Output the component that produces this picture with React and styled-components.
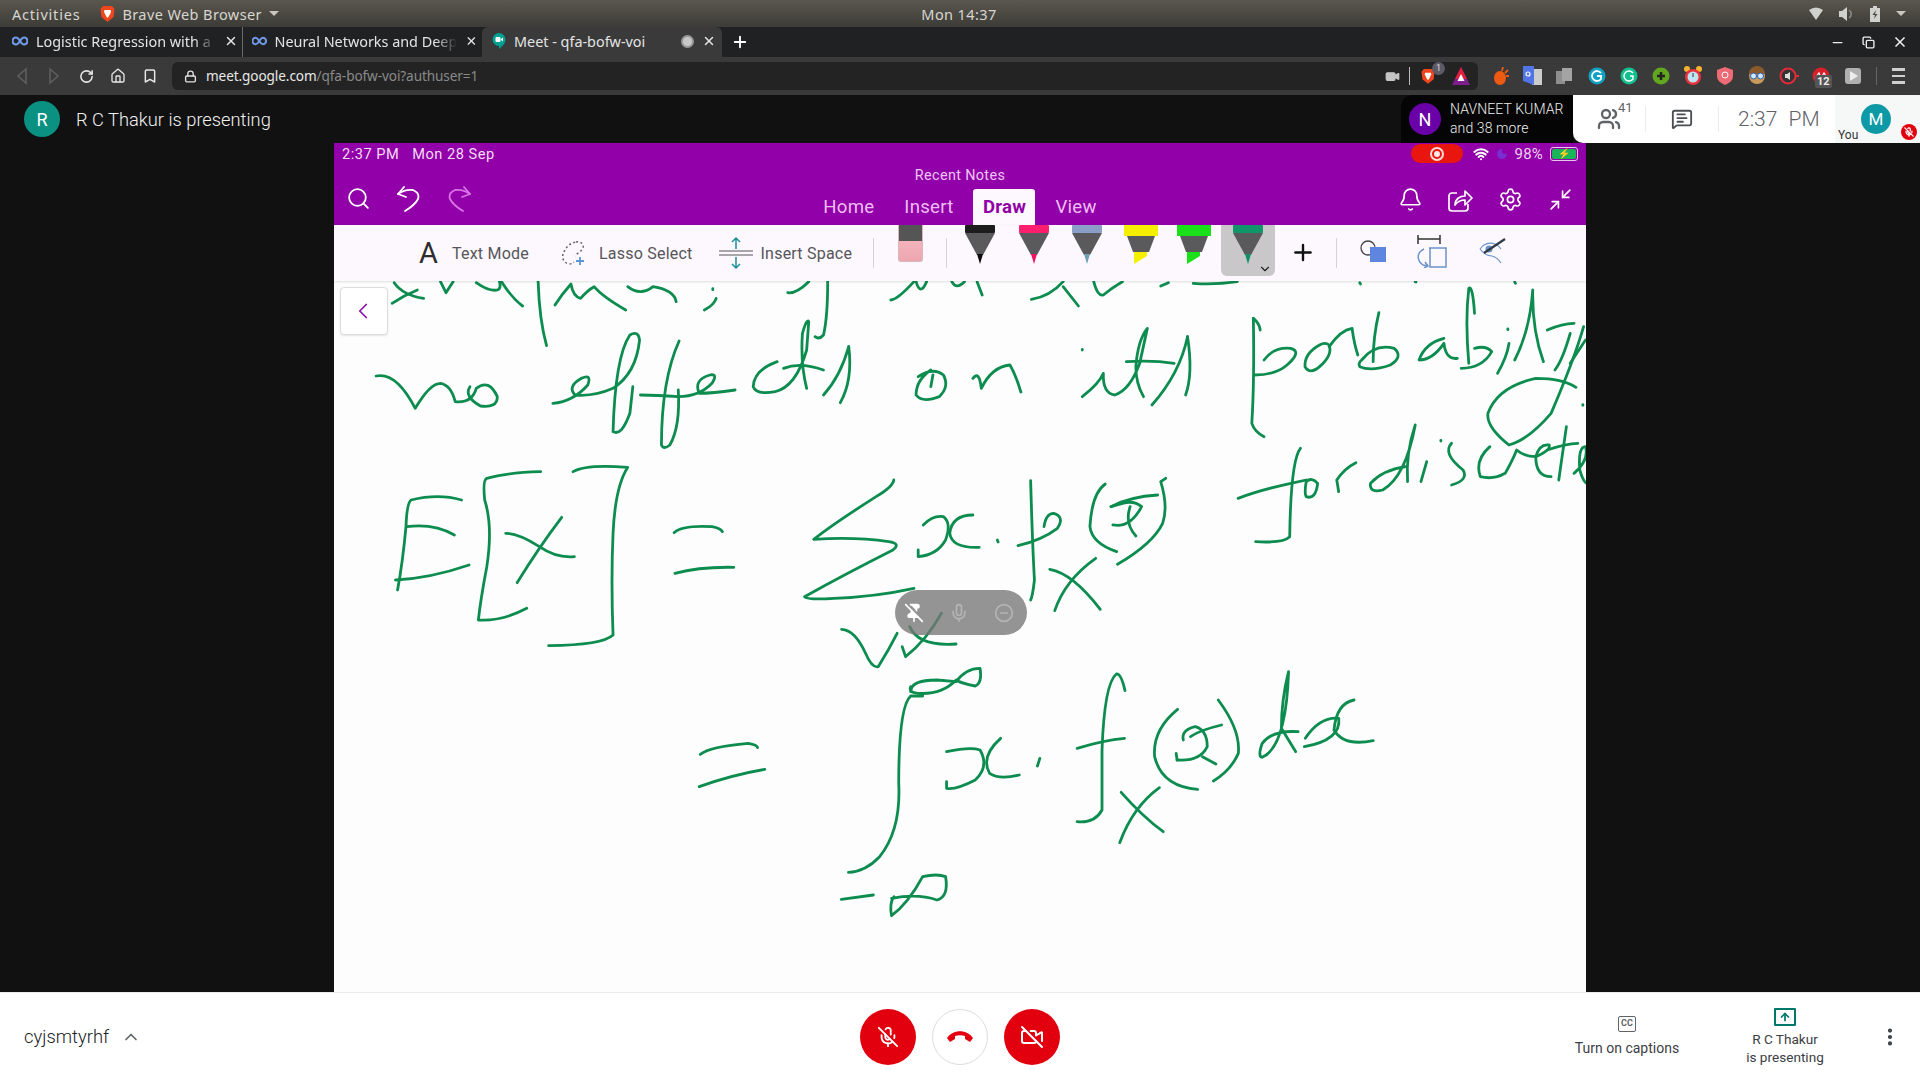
import React from 'react';
import styled, { createGlobalStyle } from 'styled-components';
import {
  ArrowUp, Bell, ChevronDown, ChevronLeft, ChevronUp, CircleMinus, EllipsisVertical, Home, Lock, Mic, MicOff, Minimize2,
  PinOff, Plus, RotateCw, Search, Settings, VideoOff, Wifi, X, Bookmark, Users,
  MessageSquareText, Moon, Minus, Copy, Video,
} from 'lucide-react';

const GlobalStyle = createGlobalStyle`
  html, body { margin: 0; padding: 0; background: #111; overflow: hidden; }
  * { box-sizing: border-box; }
  #root { width: 1920px; height: 1080px; }
`;

const Page = styled.div`
  width: 1920px;
  height: 1080px;
  display: flex;
  flex-direction: column;
  font-family: Roboto, "Noto Sans", sans-serif;
`;

/* ---------- OS bar ---------- */
const OsBar = styled.div`
  height: 27px;
  display: grid;
  grid-template-columns: 1fr auto 1fr;
  align-items: center;
  padding: 0 14px 0 12px;
  background: linear-gradient(#5a574e, #3c3b37);
  color: #d8d6d0;
  font-family: "Noto Sans", sans-serif;
  font-size: 14.5px;
`;
const OsLeft = styled.div`
  display: flex;
  align-items: center;
  gap: 7px;
`;
const OsItem = styled.span`
  margin-right: ${p => p.$mr || 0}px;
  letter-spacing: ${p => p.$ls || 0.4}px;
`;
const OsRight = styled.div`
  display: flex;
  justify-content: flex-end;
  align-items: center;
  gap: 16px;
  color: #d0d0cc;
`;
const Caret = styled.span`
  width: 0;
  height: 0;
  border-left: 5px solid transparent;
  border-right: 5px solid transparent;
  border-top: 5px solid #c8c6c0;
`;

/* ---------- Tab strip ---------- */
const TabStrip = styled.div`
  height: 30px;
  display: flex;
  align-items: stretch;
  background: #202122;
  color: #e4e4e4;
  font-family: "Noto Sans", sans-serif;
  font-size: 14.4px;
`;
const Tab = styled.div`
  width: ${p => p.$w}px;
  display: flex;
  align-items: center;
  gap: 8px;
  padding: 0 ${p => p.$pr || 4}px 2px ${p => p.$pl}px;
  background: ${p => (p.$active ? '#3a3a3a' : 'transparent')};
  border-radius: ${p => (p.$active ? '6px 6px 0 0' : '0')};
  border-right: ${p => (p.$sep ? '1px solid #6b6b6b' : 'none')};
`;
const TabTitle = styled.span`
  flex: 1;
  white-space: nowrap;
  -webkit-mask-image: ${p => (p.$fade ? 'linear-gradient(90deg, #000 88%, transparent)' : 'none')};
`;
const TabAudio = styled.span`
  width: 13px;
  height: 13px;
  border-radius: 50%;
  border: 2px solid #9a9a9a;
  background: #c8c8c8;
`;
const NewTab = styled.div`
  width: 36px;
  display: flex;
  align-items: center;
  justify-content: center;
  color: #fff;
`;
const WindowControls = styled.div`
  margin-left: auto;
  display: flex;
  align-items: center;
  gap: 17px;
  padding-right: 12px;
  color: #eee;
`;

/* ---------- Browser toolbar ---------- */
const BrowserBar = styled.div`
  height: 38px;
  display: flex;
  align-items: center;
  background: #3a3a3a;
  color: #e0e0e0;
  padding-left: 6px;
`;
const NavBtn = styled.div`
  width: 32px;
  display: flex;
  justify-content: center;
  color: ${p => (p.$off ? '#6f6f6f' : '#e6e6e6')};
`;
const Omnibox = styled.div`
  width: 1306px;
  height: 28px;
  display: flex;
  align-items: center;
  margin-left: 6px;
  padding: 0 8px 0 12px;
  background: #232323;
  border-radius: 6px;
`;
const Url = styled.span`
  margin: -2px 0 0 9px;
  color: #e8e8e8;
  font-family: "Noto Sans", sans-serif;
  font-size: 13.6px;
  letter-spacing: -0.1px;
`;
const UrlTail = styled.span`
  color: #8a8a8a;
`;
const OmniRight = styled.div`
  margin-left: auto;
  display: flex;
  align-items: center;
  color: #c4c4c4;
`;
const OmniSep = styled.span`
  width: 1px;
  height: 18px;
  background: #bdbdbd;
  margin: 0 11px 0 9px;
`;
const BraveWrap = styled.div`
  position: relative;
  margin-right: 17px;
  display: flex;
`;
const CountBadge = styled.span`
  position: absolute;
  left: 11px;
  top: -6px;
  width: 13px;
  height: 13px;
  border-radius: 50%;
  background: #5c5a66;
  color: #ddd;
  font-size: 9px;
  text-align: center;
  line-height: 13px;
`;
const ExtRow = styled.div`
  display: flex;
  align-items: center;
  margin-left: 7px;
`;
const Ext = styled.div`
  position: relative;
  width: 32px;
  display: flex;
  justify-content: center;
  align-items: center;
`;
const ExtBadge = styled.span`
  position: absolute;
  left: 10px;
  top: 8px;
  padding: 0 2px;
  background: #555;
  border-radius: 2px;
  color: #eee;
  font-size: 11px;
  font-weight: 700;
  line-height: 13px;
`;
const ToolbarSep = styled.span`
  width: 1px;
  height: 18px;
  margin: 0 5px 0 7px;
  background: #666;
`;
const MenuIcon = styled.div`
  width: 32px;
  display: flex;
  flex-direction: column;
  align-items: center;
  gap: 4px;
  & > span { width: 13px; height: 2.5px; background: #cfcfcf; }
`;

/* ---------- Meet top ---------- */
const MeetTop = styled.div`
  height: 48px;
  display: flex;
  justify-content: space-between;
  background: #111;
`;
const Presenter = styled.div`
  display: flex;
  align-items: center;
  gap: 16px;
  padding-left: 24px;
  color: #f1f1f1;
  font-size: 18.3px;
  font-weight: 300;
`;
const Avatar = styled.div`
  width: ${p => p.$size}px;
  height: ${p => p.$size}px;
  flex: none;
  border-radius: 50%;
  display: flex;
  align-items: center;
  justify-content: center;
  background: ${p => p.$bg};
  color: #fff;
  font-size: ${p => p.$font || 18}px;
  font-weight: 400;
`;
const MeetRight = styled.div`
  display: flex;
`;
const OthersPanel = styled.div`
  width: 172px;
  display: flex;
  align-items: center;
  gap: 9px;
  padding-left: 8px;
  background: #050505;
  border-radius: 12px 0 0 0;
  color: #eee;
  font-size: 14px;
  font-weight: 300;
  letter-spacing: 0.1px;
  line-height: 19px;
`;
const InfoPanel = styled.div`
  width: 262px;
  display: flex;
  align-items: center;
  padding-left: 24px;
  background: #fff;
  border-radius: 0 0 0 10px;
  color: #5f6368;
`;
const PeopleCount = styled.div`
  position: relative;
  width: 48px;
  display: flex;
  & > sup {
    position: absolute;
    left: 21px;
    top: -6px;
    font-size: 13px;
    line-height: 14px;
  }
`;
const PanelSep = styled.span`
  width: 1px;
  height: 26px;
  background: #eceded;
`;
const ChatBtn = styled.div`
  width: 72px;
  display: flex;
  justify-content: center;
  color: #4a4d51;
`;
const Clock = styled.span`
  margin-left: 19px;
  font-size: 21px;
  font-weight: 300;
  word-spacing: 6px;
  white-space: nowrap;
`;
const YouTile = styled.div`
  position: relative;
  width: 85px;
  padding: 9px 0 0 26px;
  background: #f6f8f8;
`;
const YouLabel = styled.span`
  position: absolute;
  left: 3px;
  bottom: 0;
  color: #333;
  font-size: 12px;
  line-height: 15px;
`;
const MutedBadge = styled.span`
  position: absolute;
  right: 3px;
  bottom: 3px;
  width: 16px;
  height: 16px;
  border-radius: 50%;
  background: #e2000f;
  color: #fff;
  display: flex;
  align-items: center;
  justify-content: center;
`;

/* ---------- Stage / OneNote slide ---------- */
const Stage = styled.div`
  height: 849px;
  display: flex;
  justify-content: center;
  background: #111;
`;
const Slide = styled.div`
  width: 1252px;
  display: flex;
  flex-direction: column;
  background: #fefdfe;
`;
const AppHeader = styled.div`
  height: 82px;
  padding: 0 8px;
  flex: none;
  display: grid;
  grid-template-columns: 1fr auto 1fr;
  grid-template-rows: 23px 1fr;
  background: #9100a8;
  color: #f6d8f8;
`;
const StatusLeft = styled.div`
  grid-column: 1 / 3;
  display: flex;
  align-items: center;
  gap: 13px;
  margin-top: -2px;
  font-size: 14.6px;
  letter-spacing: 0.5px;
  color: #f3dcf5;
`;
const StatusRight = styled.div`
  display: flex;
  align-items: center;
  justify-content: flex-end;
  gap: 7px;
  font-size: 15px;
  letter-spacing: 0.2px;
  margin-top: -2px;
  color: #eed0f2;
`;
const RecPill = styled.span`
  width: 52px;
  height: 19px;
  margin-right: 3px;
  border-radius: 10px;
  background: #e8160e;
  display: flex;
  align-items: center;
  justify-content: center;
`;
const RecDot = styled.span`
  width: 14px;
  height: 14px;
  border-radius: 50%;
  border: 2px solid #ffd9d5;
  display: flex;
  align-items: center;
  justify-content: center;
  &::after { content: ''; width: 6px; height: 6px; border-radius: 50%; background: #ffe8e6; }
`;
const Battery = styled.span`
  width: 28px;
  height: 14px;
  padding: 1px;
  border: 1px solid #e6c4ea;
  border-radius: 3px;
  display: flex;
`;
const BatteryFill = styled.span`
  flex: 1;
  border-radius: 2px;
  background: #19b35a;
  color: #fff;
  font-size: 10px;
  line-height: 10px;
  text-align: center;
`;
const HeaderTools = styled.div`
  display: flex;
  align-items: flex-start;
  gap: 26px;
  padding: 20px 0 0 4px;
  color: #fff;
`;
const HeaderCenter = styled.div`
  display: flex;
  flex-direction: column;
  align-items: center;
`;
const RecentNotes = styled.span`
  height: 24px;
  padding-top: 1px;
  font-size: 14.4px;
  line-height: 18px;
  letter-spacing: 0.35px;
  color: #eec6f2;
`;
const Tabs = styled.div`
  display: flex;
  align-items: flex-end;
  gap: 20px;
  height: 35px;
`;
const NoteTab = styled.span`
  width: ${p => (p.$active ? '62px' : 'auto')};
  height: 36px;
  margin-right: ${p => p.$mr || 0}px;
  display: flex;
  align-items: center;
  justify-content: center;
  font-size: 18.6px;
  letter-spacing: 0.25px;
  font-weight: ${p => (p.$active ? 700 : 400)};
  color: ${p => (p.$active ? '#8f00a6' : '#f0bef4')};
  background: ${p => (p.$active ? '#fdf8fd' : 'transparent')};
  border-radius: ${p => (p.$active ? '3px 3px 0 0' : 0)};
`;
const HeaderRight = styled.div`
  display: flex;
  justify-content: flex-end;
  align-items: flex-start;
  gap: 25px;
  padding: 21px 5px 0 0;
  color: #fff;
`;
const Ribbon = styled.div`
  height: 56px;
  flex: none;
  display: flex;
  align-items: flex-start;
  padding-left: 85px;
  background: #fdf8fd;
  box-shadow: 0 1px 2px rgba(0, 0, 0, 0.12);
  color: #55555a;
  font-size: 16px;
  position: relative;
  z-index: 1;
`;
const RibbonItem = styled.div`
  height: 56px;
  margin-left: ${p => p.$ml || 0}px;
  display: flex;
  align-items: center;
  gap: ${p => p.$gap}px;
  white-space: nowrap;
  letter-spacing: 0.22px;
`;
const BigA = styled.span`
  width: 18px;
  color: #2d2d2d;
  font-size: 29px;
  line-height: 1;
  font-weight: 400;
`;
const RibbonSep = styled.span`
  width: 1px;
  height: 30px;
  margin: 13px 0 0 ${p => p.$ml || 0}px;
  background: #d6d3d6;
`;
const Eraser = styled.div`
  width: 25px;
  height: 37px;
  margin-left: 24px;
  margin-right: 23px;
  border-radius: 0 0 3px 3px;
  background: linear-gradient(#555 0 16px, #f3b3bb 16px, #eda6b0);
  border: 1px solid #d9b7bc;
  border-top: none;
`;
const PenRow = styled.div`
  display: flex;
  margin-left: 6px;
`;
const PenSlot = styled.div`
  position: relative;
  width: 53.6px;
  height: ${p => (p.$selected ? 51 : 46)}px;
  display: flex;
  justify-content: center;
  background: ${p => (p.$selected ? '#c9c7c9' : 'transparent')};
  border-radius: 0 0 6px 6px;
`;
const PenCaret = styled.span`
  position: absolute;
  right: 3px;
  bottom: 0;
  color: #222;
  display: flex;
`;
const AddPen = styled.div`
  width: 26px;
  height: 54px;
  margin-left: 15px;
  display: flex;
  align-items: center;
  color: #111;
`;
const RibbonIcon = styled.div`
  height: 52px;
  margin-left: ${p => p.$ml}px;
  display: flex;
  align-items: center;
`;

const Canvas = styled.div`
  position: relative;
  flex: 1;
  overflow: hidden;
  background: #fefdfe;
`;
const Ink = styled.svg`
  display: block;
  width: 1252px;
  height: 711px;
  fill: none;
  stroke: #0d8c4f;
  stroke-width: 2.8;
  stroke-linecap: round;
  stroke-linejoin: round;
  & path { vector-effect: non-scaling-stroke; }
`;
const BackBtn = styled.div`
  position: absolute;
  left: 6px;
  top: 6px;
  width: 48px;
  height: 48px;
  display: flex;
  align-items: center;
  justify-content: center;
  padding-right: 2px;
  background: #fff;
  border: 1px solid #ddd;
  border-radius: 4px;
  box-shadow: 0 1px 2px rgba(0, 0, 0, 0.1);
  color: #8a10a8;
`;
const FloatPill = styled.div`
  position: absolute;
  left: 561px;
  top: 309px;
  width: 132px;
  height: 45px;
  display: flex;
  align-items: center;
  gap: 25px;
  padding-left: 9px;
  border-radius: 23px;
  background: rgba(118, 118, 118, 0.78);
  color: #b4b4b4;
`;

/* ---------- Meet bottom ---------- */
const BottomBar = styled.div`
  flex: 1;
  display: grid;
  grid-template-columns: 1fr auto 1fr;
  align-items: center;
  background: #fff;
  border-top: 1px solid #e8eaed;
  color: #3c4043;
`;
const MeetingName = styled.div`
  display: flex;
  align-items: center;
  gap: 12px;
  padding-left: 24px;
  font-size: 18.4px;
  font-weight: 300;
  color: #202124;
`;
const CallBtns = styled.div`
  display: flex;
  gap: 16px;
`;
const CallBtn = styled.div`
  width: 56px;
  height: 56px;
  border-radius: 50%;
  display: flex;
  align-items: center;
  justify-content: center;
  color: ${p => (p.$outline ? '#e2000f' : '#fff')};
  background: ${p => (p.$outline ? '#fff' : '#e2000f')};
  border: ${p => (p.$outline ? '1px solid #dadce0' : 'none')};
`;
const BottomRight = styled.div`
  display: flex;
  justify-content: flex-end;
  align-items: center;
`;
const ActionBtn = styled.div`
  width: ${p => p.$w}px;
  margin-right: ${p => p.$mr || 0}px;
  display: flex;
  flex-direction: column;
  align-items: center;
  gap: ${p => p.$gap}px;
  font-size: ${p => p.$font || 14}px;
  line-height: 18px;
  text-align: center;
  color: #3c4043;
`;
const CcIcon = styled.span`
  width: 18px;
  height: 16px;
  border: 1.5px solid #5f6368;
  border-radius: 2px;
  color: #5f6368;
  font-size: 9px;
  font-weight: 700;
  line-height: 13px;
  text-align: center;
`;
const PresentIcon = styled.span`
  width: 22px;
  height: 18px;
  border: 2px solid #00796b;
  border-radius: 1px;
  color: #00796b;
  display: flex;
  align-items: center;
  justify-content: center;
`;
const MoreBtn = styled.div`
  width: 60px;
  display: flex;
  justify-content: center;
  color: #3c4043;
`;

/* ---------- small drawings ---------- */
const InfinityTab = () => (
  <svg width="16" height="10" viewBox="0 0 16 10" fill="none" stroke="#6f9be8" strokeWidth="2.2">
    <path d="M8 5C6.5 2.5 5.5 1.5 4 1.5a3.5 3.5 0 0 0 0 7C5.5 8.5 6.5 7.500 8 5c1.500-2.500 2.500-3.500 4-3.500a3.500 3.500 0 0 1 0 7c-1.500 0-2.500-1-4-3.500z" />
  </svg>
);
const MeetTabIcon = () => (
  <svg width="14" height="18" viewBox="0 0 14 18">
    <path d="M7 1a6.500 6.500 0 0 1 6.500 6.500c0 4-3.500 6.500-6 9.500-.5-2-.5-3-.5-3A6.500 6.500 0 0 1 7 1z" fill="#00a191" />
    <rect x="3.500" y="5" width="5" height="5" rx="1" fill="#fff" />
    <path d="M9 7l2-1.500v4L9 8z" fill="#fff" />
  </svg>
);
const BraveIcon = ({ size = 15 }) => (
  <svg width={size} height={size * 1.2} viewBox="0 0 15 18">
    <path d="M3 1h9l2.500 3-1 8L7.500 17l-6-5-1-8z" fill="#f0461d" />
    <path d="M4.500 5h6l.5 2-2 4-1.500 2-1.500-2-2-4z" fill="#fff" />
  </svg>
);
const OsWifi = () => (
  <svg width="14" height="13" viewBox="0 0 14 13"><path d="M0 3Q7-2 14 3L7 13z" fill="#d0d0cc" /></svg>
);
const OsSpeaker = () => (
  <svg width="15" height="14" viewBox="0 0 15 14" fill="#d0d0cc">
    <path d="M0 4h3l5-4v14l-5-4H0z" />
    <path d="M10 3c3 2 3 6 0 8" fill="none" stroke="#8e8c86" strokeWidth="1.500" />
  </svg>
);
const BatIcon = () => (
  <svg width="10" height="16" viewBox="0 0 10 16" fill="#d0d0cc">
    <path d="M3 0h4v2h3v14H0V2h3z" />
    <path d="M6 4L2.500 9H5l-1 4 3.500-5H5z" fill="#4a4843" />
  </svg>
);
const NavTriangle = ({ flip }) => (
  <svg width="12" height="18" viewBox="0 0 12 18" fill="none" stroke="#5e5e5e" strokeWidth="1.600" style={{ transform: flip ? 'scaleX(-1)' : 'none' }}>
    <path d="M10 2L2 9l8 7z" />
  </svg>
);
const Triangle = () => (
  <svg width="18" height="18" viewBox="0 0 18 18">
    <path d="M9 0l9 18H0z" fill="#7d1e8c" />
    <path d="M9 0l6 12H3z" fill="#e01f3d" />
    <path d="M9 7l3.500 7h-7z" fill="#fff" />
  </svg>
);
const Disc = ({ color, children }) => (
  <svg width="18" height="18" viewBox="0 0 18 18">
    <circle cx="9" cy="9" r="8.500" fill={color} />
    {children}
  </svg>
);
const UndoArrow = ({ flip, color = '#fff' }) => (
  <svg width="24" height="26" viewBox="0 0 24 26" fill="none" stroke={color} strokeWidth="1.800" strokeLinecap="round" strokeLinejoin="round" style={{ transform: flip ? 'scaleX(-1)' : 'none' }}>
    <path d="M7 1L1 8l8 3" />
    <path d="M1 8Q8 3 16 4q7 3 5 9-3 6-13 12" />
  </svg>
);
const ShareBox = () => (
  <svg width="25" height="26" viewBox="0 0 25 26" fill="none" stroke="#fff" strokeWidth="1.700" strokeLinejoin="round">
    <path d="M9 6H4a3 3 0 0 0-3 3v12a3 3 0 0 0 3 3h13a3 3 0 0 0 3-3v-4" />
    <path d="M7 18c0-6 5-9 10-9V4l7 7-7 7v-5c-4 0-7 1-10 5z" />
  </svg>
);
const HangUp = () => (
  <svg width="26" height="11" viewBox="0 0 26 11" fill="#e2000f">
    <path d="M0 7C6-2 20-2 26 7l-3 4-5-3V5c-3-1-7-1-10 0v3l-5 3z" />
  </svg>
);
const Pen = ({ body = '#5a5a5c', band, tip, chisel }) => (
  <svg width="36" height="46" viewBox="0 0 36 46">
    {chisel ? (
      <>
        <rect x="1" y="0" width="34" height="11" fill={band} />
        <path d="M4 11h28l-6 16H10z" fill={body} />
        <path d="M11 27h13v4L11 39z" fill={tip} />
      </>
    ) : (
      <>
        <rect x="3" y="0" width="30" height="8" rx="1" fill={band} />
        <path d="M3 8h30L21 30h-6z" fill={body} />
        <path d="M15 29h6l-3 10z" fill={tip} />
      </>
    )}
  </svg>
);
const LassoIcon = () => (
  <svg width="25" height="26" viewBox="0 0 25 26" fill="none">
    <path d="M15 2c5-1 8 2 7 6-2 4-6 5-8 8M3 12c2-5 6-9 12-10M2 14c-1 5 1 9 6 10 3 0 4-1 5-2" stroke="#666" strokeWidth="1.500" strokeDasharray="2 2.500" />
    <path d="M19 17v8M15 21h8" stroke="#5d94d8" strokeWidth="1.800" />
  </svg>
);
const SpaceIcon = () => (
  <svg width="34" height="34" viewBox="0 0 34 34" fill="none">
    <path d="M17 2v11M13 6l4-4 4 4M17 21v11M13 28l4 4 4-4" stroke="#1a8f9c" strokeWidth="1.500" />
    <path d="M0 15h34M0 19h34" stroke="#8d8a8d" strokeWidth="1.500" />
  </svg>
);
const ShapesIcon = () => (
  <svg width="28" height="24" viewBox="0 0 28 24" fill="none">
    <circle cx="9" cy="9" r="7" stroke="#444" strokeWidth="1.300" />
    <rect x="11" y="8" width="16" height="15" fill="#5f86de" />
  </svg>
);
const ResizeIcon = () => (
  <svg width="32" height="34" viewBox="0 0 32 34" fill="none" strokeWidth="1.500">
    <path d="M2 1v9M24 1v9M2 5h22" stroke="#333" />
    <path d="M13 14h17v19H14V14" stroke="#6a92c8" />
    <path d="M8 15c-7 3-8 11-1 16l5 1M9 28l3 4-4 2" stroke="#6a92c8" />
  </svg>
);
const EyeIcon = () => (
  <svg width="27" height="26" viewBox="0 0 27 26" fill="none">
    <path d="M1 11c3-5 9-7 15-5 2 1 5 3 6 5M1 11c4 5 8 7 12 7 4 1 7 4 9 7" stroke="#6a92c8" strokeWidth="1.200" />
    <circle cx="10" cy="11" r="3.500" fill="#6a92c8" />
    <path d="M5 15L26 1" stroke="#2f3a46" strokeWidth="2.200" />
  </svg>
);

const Strokes = ({ d }) => d.map((s, i) => <path key={i} d={s} />);

/* ink traced in three blocks of the note, each with its own scale */
const upperInk = [
  'M100 70Q130 45 160 30', 'M105 8Q125 45 175 55', 'M215 5L228 38L245 5',
  'M300 8Q330 35 350 30Q360 25 355 5', 'M360 5Q385 55 410 78', 'M447 5Q450 120 467 197',
  'M487 75Q505 40 525 12Q530 50 548 55Q565 30 580 20Q600 50 655 90', 'M660 20Q690 50 720 20Q770 30 775 65', 'M870 55Q865 75 842 90', 'M862 26L862 29',
  'M1040 38Q1060 42 1090 5', 'M1135 5Q1135 110 1125 165Q1115 180 1105 170', 'M1285 60Q1300 60 1340 5', 'M1345 5Q1355 50 1370 5', 'M1430 5Q1440 30 1460 5', 'M1490 5L1502 45',
  'M62 288Q110 275 155 385Q190 310 215 310Q240 315 250 365Q290 370 300 325Q330 295 350 350Q350 385 310 378Q270 350 285 320',
  'M482 370Q530 365 565 315Q575 280 550 295Q515 320 535 345Q580 350 625 325Q680 280 688 180Q685 150 665 165Q630 230 625 455Q645 470 665 400L672 320',
  'M782 183Q740 300 740 495Q745 510 760 495Q785 440 780 330', 'M690 345Q730 345 780 350Q830 350 860 310Q875 280 855 285Q815 300 830 340Q860 340 915 330',
  'M1015 245Q960 270 958 320Q965 345 1010 335Q1060 320 1085 210L1090 125Q1085 115 1075 160Q1070 250 1085 325', 'M1030 265Q1070 245 1125 270',
  'M1185 200Q1165 290 1125 345', 'M1185 200Q1195 300 1165 368',
  'M1380 270Q1345 300 1345 345Q1360 370 1400 350Q1425 320 1410 285Q1385 260 1350 290', 'M1385 285L1380 320', 'M1480 295Q1495 270 1500 325Q1525 260 1568 255Q1582 285 1594 336',
  'M265 660Q210 640 145 660Q135 670 133 740Q125 850 113 930', 'M135 740Q200 730 248 765', 'M108 900Q190 895 283 855',
  'M453 575Q370 578 325 595Q315 600 320 660Q340 740 325 860Q310 960 305 1020Q360 1025 420 985',
  'M370 760Q400 760 450 800Q490 835 533 830', 'M503 712Q450 800 397 908',
  'M530 575Q560 552 660 562Q630 620 625 760Q620 900 625 1065Q600 1095 472 1097',
  'M770 758Q790 735 860 740Q880 745 885 755', 'M772 880Q830 860 912 862',
  'M1292 600Q1290 620 1250 650Q1150 730 1102 778Q1200 770 1280 785Q1310 790 1290 810Q1180 880 1080 950Q1085 960 1150 955Q1250 950 1340 925',
  'M1362 735Q1385 705 1410 710Q1430 730 1415 780Q1395 825 1350 830L1350 810', 'M1480 705Q1430 705 1425 760Q1430 805 1495 802', 'M1538 780L1540 786',
  'M1168 1048Q1200 1050 1225 1120Q1240 1165 1255 1160Q1280 1110 1300 1060', 'M1405 1000Q1370 1080 1320 1130L1312 1100', 'M1330 1040Q1350 1100 1440 1092',
];
const rightInk = [
  'M82 58Q130 50 165 5', 'M165 20L205 78', 'M245 5Q255 50 270 45Q290 25 320 5', 'M420 18L440 8', 'M505 10Q560 15 620 5', 'M940 8L942 12', 'M1085 5L1087 6', 'M1345 6L1347 10',
  'M215 350Q260 310 270 280Q268 340 300 345Q340 330 365 250L385 145Q360 180 355 260Q355 310 375 350', 'M215 208L215 210', 'M330 245Q400 240 455 250', 'M490 170Q470 280 397 375', 'M490 170Q505 280 485 345',
  'M662 115Q678 130 680 150', 'M662 115Q665 300 658 430Q665 455 690 470', 'M665 285Q720 285 750 255Q790 215 760 205Q715 200 690 240',
  'M835 195Q795 220 797 260Q810 285 835 260Q870 225 860 195Q850 185 835 195', 'M860 200Q890 150 920 145Q925 190 935 225', 'M990 98Q975 170 975 245',
  'M945 240Q980 190 1030 205Q1055 230 1020 255Q970 275 940 260Q935 250 945 240', 'M1160 175Q1110 190 1095 240Q1130 240 1160 190Q1165 240 1195 235',
  'M1240 100Q1235 15 1225 25Q1215 120 1225 250', 'M1205 265Q1260 265 1285 215Q1270 195 1240 205', 'M1300 280Q1325 230 1330 190', 'M1327 147L1327 149', 'M1345 240Q1385 150 1392 30Q1390 150 1420 245',
  'M1430 150Q1470 130 1500 130', 'M1450 270Q1470 240 1490 160', 'M1525 140Q1500 240 1440 400Q1380 480 1330 495Q1270 440 1275 400Q1300 320 1400 295Q1470 295 1505 322', 'M1490 250L1530 180', 'M1523 374L1523 376',
  'M622 655Q680 630 760 610Q780 605 800 600', 'M785 505Q760 540 757 770Q740 790 668 785', 'M800 650Q825 660 830 610Q815 590 800 605Q795 640 800 650', 'M885 635L880 600Q900 565 930 548',
  'M1060 560Q1000 570 968 610Q965 640 1000 630Q1060 590 1085 435Q1060 520 1065 605', 'M1100 605L1115 545', 'M1152 481L1152 483', 'M1180 615Q1225 600 1210 570Q1155 520 1180 490',
  'M1280 500Q1240 540 1255 590Q1290 600 1320 580Q1340 540 1350 510Q1370 530 1400 530', 'M1400 530Q1440 510 1435 495Q1410 490 1400 530Q1400 590 1440 590', 'M1480 440Q1470 520 1460 600', 'M1430 510Q1480 490 1510 490', 'M1500 580Q1540 540 1530 500Q1510 500 1515 570Q1525 610 1535 610',
  'M80 602Q85 800 90 900Q85 950 80 960', 'M47 797Q110 780 150 745Q170 710 140 700Q120 700 115 740', 'M275 612Q240 640 235 740Q240 790 305 815',
  'M295 735Q340 745 370 680Q350 660 320 670L290 680', 'M340 680Q325 730 355 768', 'M412 645Q340 650 290 680', 'M433 595L420 605Q440 680 425 730Q400 790 307 853',
  'M130 868Q190 880 262 988', 'M250 835Q170 900 143 992',
];
const lowerInk = [
  'M105 313Q125 290 205 280Q225 285 225 293', 'M103 410Q170 375 240 358', 'M570 138L545 138Q520 170 520 400Q525 540 480 620Q450 665 415 667',
  'M545 125Q545 90 600 90L640 95Q660 55 690 55Q695 100 680 108Q650 100 640 90Q610 135 560 130Q540 128 545 110',
  'M620 305Q670 290 690 300Q710 350 680 390Q640 420 620 415L620 395', 'M733 265Q690 320 710 370Q730 390 772 375', 'M815 325L810 348',
  'M993 122Q985 70 975 72Q950 100 945 300L945 480Q930 520 893 515', 'M893 295Q950 270 992 265', 'M985 427Q1030 500 1073 545', 'M1065 413Q1010 470 982 578',
  'M1103 178Q1050 240 1055 320Q1070 410 1145 418', 'M1102 330Q1150 335 1165 290Q1165 240 1140 230Q1110 240 1115 270', 'M1195 225Q1150 240 1130 260', 'M1100 310L1102 330', 'M1155 320L1183 342',
  'M1188 150Q1235 240 1230 310Q1215 360 1178 393', 'M1355 245Q1300 240 1280 280Q1270 320 1280 322Q1330 290 1335 65Q1320 150 1320 235L1350 305',
  'M1370 265Q1400 200 1440 205Q1445 270 1368 290', 'M1472 150Q1435 160 1430 240Q1450 290 1512 272',
  'M400 748L467 735', 'M505 745Q560 730 600 750Q625 740 618 680Q600 670 570 680Q540 760 505 797Q500 760 510 740',
];

export default function App() {
  return (
    <Page>
      <GlobalStyle />
      <OsBar>
        <OsLeft>
          <OsItem $mr={13} $ls={0.8}>Activities</OsItem>
          <BraveIcon size={15} />
          <OsItem>Brave Web Browser</OsItem>
          <Caret />
        </OsLeft>
        <OsItem>Mon 14:37</OsItem>
        <OsRight>
          <OsWifi />
          <OsSpeaker />
          <BatIcon />
          <Caret />
        </OsRight>
      </OsBar>

      <TabStrip>
        <Tab $w={243} $pl={12} $sep>
          <InfinityTab />
          <TabTitle $fade>Logistic Regression with a</TabTitle>
          <X size={14} strokeWidth={2.5} />
        </Tab>
        <Tab $w={239} $pl={9}>
          <InfinityTab />
          <TabTitle $fade>Neural Networks and Deep</TabTitle>
          <X size={14} strokeWidth={2.5} />
        </Tab>
        <Tab $w={240} $pl={10} $pr={6} $active>
          <MeetTabIcon />
          <TabTitle>Meet - qfa-bofw-voi</TabTitle>
          <TabAudio />
          <X size={14} strokeWidth={2.5} />
        </Tab>
        <NewTab><Plus size={18} strokeWidth={2.5} /></NewTab>
        <WindowControls>
          <Minus size={15} />
          <Copy size={13} strokeWidth={2.5} />
          <X size={16} strokeWidth={2.5} />
        </WindowControls>
      </TabStrip>

      <BrowserBar>
        <NavBtn $off><NavTriangle /></NavBtn>
        <NavBtn $off><NavTriangle flip /></NavBtn>
        <NavBtn><RotateCw size={15} strokeWidth={2.5} /></NavBtn>
        <NavBtn><Home size={16} /></NavBtn>
        <NavBtn><Bookmark size={16} strokeWidth={2.2} /></NavBtn>
        <Omnibox>
          <Lock size={13} strokeWidth={2.5} />
          <Url>meet.google.com<UrlTail>/qfa-bofw-voi?authuser=1</UrlTail></Url>
          <OmniRight>
            <Video size={15} fill="#c4c4c4" />
            <OmniSep />
            <BraveWrap><BraveIcon size={14} /><CountBadge>1</CountBadge></BraveWrap>
            <Triangle />
          </OmniRight>
        </Omnibox>
        <ExtRow>
          <Ext><svg width="16" height="18" viewBox="0 0 16 18"><ellipse cx="7" cy="11" rx="6" ry="7" fill="#ee5a12" /><path d="M9 4l1-4M12 6l3-3M13 9h3" stroke="#ee5a12" strokeWidth="1.800" /></svg></Ext>
          <Ext><svg width="20" height="20" viewBox="0 0 20 20"><rect x="9" y="3" width="10" height="16" fill="#ccc" /><path d="M0 0h11v19L0 15z" fill="#5174e6" /><circle cx="5" cy="8" r="2" fill="none" stroke="#fff" strokeWidth="1.200" /></svg></Ext>
          <Ext><svg width="18" height="18" viewBox="0 0 18 18"><rect x="0" y="4" width="9" height="13" fill="#8e8e8e" /><rect x="6" y="1" width="10" height="13" fill="#a4a4a4" /></svg></Ext>
          <Ext><Disc color="#0fa2c4"><path d="M13 6a5 5 0 1 0 0 6V9H9" fill="none" stroke="#fff" strokeWidth="1.800" /></Disc></Ext>
          <Ext><Disc color="#11c08e"><path d="M13 6a5 5 0 1 0 0 6V9H10" fill="none" stroke="#fff" strokeWidth="1.500" /></Disc></Ext>
          <Ext><Disc color="#62a61f"><path d="M9 5v8M5 9h8" stroke="#222" strokeWidth="2.500" /></Disc></Ext>
          <Ext><svg width="18" height="20" viewBox="0 0 18 20"><circle cx="3" cy="3" r="3" fill="#f3b52e" /><circle cx="15" cy="3" r="3" fill="#f3b52e" /><circle cx="9" cy="11" r="8" fill="#e8323c" /><circle cx="9" cy="11" r="5.500" fill="#bfe4f4" /><path d="M9 7v4" stroke="#333" /></svg></Ext>
          <Ext><svg width="16" height="18" viewBox="0 0 16 18"><path d="M8 0l8 3v6c0 5-4 7-8 9-4-2-8-4-8-9V3z" fill="#ee6a75" /><circle cx="8" cy="8" r="3" fill="none" stroke="#fff" /></svg></Ext>
          <Ext><svg width="18" height="20" viewBox="0 0 18 20"><circle cx="9" cy="10" r="8" fill="#c99a5c" /><path d="M1 8a8 8 0 0 1 16 0z" fill="#8b5a2b" /><circle cx="5.500" cy="10" r="3" fill="#cfe6ff" stroke="#2e5fa8" /><circle cx="12.500" cy="10" r="3" fill="#cfe6ff" stroke="#2e5fa8" /></svg></Ext>
          <Ext><svg width="20" height="18" viewBox="0 0 20 18"><circle cx="9" cy="9" r="7.500" fill="#333" stroke="#e12b38" strokeWidth="2" /><path d="M6 7h2l3-2v8l-3-2H6z" fill="#ddd" /><path d="M16 9h4" stroke="#e12b38" strokeWidth="2" /></svg></Ext>
          <Ext><Disc color="#d81f2a"><path d="M3 11l4-5 2 5 3-5 3 5" fill="none" stroke="#fff" strokeWidth="1.200" /></Disc><ExtBadge>12</ExtBadge></Ext>
          <Ext><svg width="16" height="16" viewBox="0 0 16 16"><rect width="16" height="16" rx="3" fill="#b0b0b0" /><path d="M5 3l8 5-8 5z" fill="#eee" /></svg></Ext>
          <ToolbarSep />
          <MenuIcon><span /><span /><span /></MenuIcon>
        </ExtRow>
      </BrowserBar>

      <MeetTop>
        <Presenter>
          <Avatar $size={36} $bg="#0b9182">R</Avatar>
          R C Thakur is presenting
        </Presenter>
        <MeetRight>
          <OthersPanel>
            <Avatar $size={32} $bg="#6a00a8">N</Avatar>
            <div>NAVNEET KUMAR<br />and 38 more</div>
          </OthersPanel>
          <InfoPanel>
            <PeopleCount><Users size={24} strokeWidth={2.3} /><sup>41</sup></PeopleCount>
            <PanelSep />
            <ChatBtn><MessageSquareText size={22} /></ChatBtn>
            <PanelSep />
            <Clock>2:37 PM</Clock>
          </InfoPanel>
          <YouTile>
            <Avatar $size={30} $bg="#0d9aa6" $font={17}>M</Avatar>
            <YouLabel>You</YouLabel>
            <MutedBadge><MicOff size={10} strokeWidth={3} /></MutedBadge>
          </YouTile>
        </MeetRight>
      </MeetTop>

      <Stage>
        <Slide>
          <AppHeader>
            <StatusLeft><span>2:37 PM</span><span>Mon 28 Sep</span></StatusLeft>
            <StatusRight>
              <RecPill><RecDot /></RecPill>
              <Wifi size={16} color="#fff" strokeWidth={3} />
              <Moon size={12} fill="#7a2fd0" color="#7a2fd0" />
              <span>98%</span>
              <Battery><BatteryFill>⚡</BatteryFill></Battery>
            </StatusRight>
            <HeaderTools>
              <Search size={25} strokeWidth={1.7} />
              <UndoArrow />
              <UndoArrow flip color="#d973e6" />
            </HeaderTools>
            <HeaderCenter>
              <RecentNotes>Recent Notes</RecentNotes>
              <Tabs>
                <NoteTab $mr={10}>Home</NoteTab>
                <NoteTab>Insert</NoteTab>
                <NoteTab $active>Draw</NoteTab>
                <NoteTab>View</NoteTab>
              </Tabs>
            </HeaderCenter>
            <HeaderRight>
              <Bell size={25} strokeWidth={1.6} />
              <ShareBox />
              <Settings size={25} strokeWidth={1.6} />
              <Minimize2 size={25} strokeWidth={1.6} />
            </HeaderRight>
          </AppHeader>

          <Ribbon>
            <RibbonItem $gap={15}><BigA>A</BigA>Text Mode</RibbonItem>
            <RibbonItem $gap={13} $ml={32}><LassoIcon />Lasso Select</RibbonItem>
            <RibbonItem $gap={8} $ml={26}><SpaceIcon />Insert Space</RibbonItem>
            <RibbonSep $ml={21} />
            <Eraser />
            <RibbonSep />
            <PenRow>
              <PenSlot><Pen band="#1d1d1d" tip="#0c0c0c" /></PenSlot>
              <PenSlot><Pen band="#ff1f6e" tip="#f01460" /></PenSlot>
              <PenSlot><Pen band="#8a9ec8" tip="#6ea0b0" /></PenSlot>
              <PenSlot><Pen band="#f6f000" tip="#f6f000" chisel /></PenSlot>
              <PenSlot><Pen band="#19e019" tip="#19e019" chisel /></PenSlot>
              <PenSlot $selected>
                <Pen band="#12956a" tip="#0f8f64" />
                <PenCaret><ChevronDown size={14} /></PenCaret>
              </PenSlot>
            </PenRow>
            <AddPen><Plus size={27} strokeWidth={2.2} /></AddPen>
            <RibbonSep $ml={20} />
            <RibbonIcon $ml={22}><ShapesIcon /></RibbonIcon>
            <RibbonIcon $ml={29}><ResizeIcon /></RibbonIcon>
            <RibbonIcon $ml={31}><EyeIcon /></RibbonIcon>
          </Ribbon>

          <Canvas>
            <Ink viewBox="334 281 1252 711">
              <g transform="translate(350 280) scale(0.42088 0.33333)"><Strokes d={upperInk} /></g>
              <g transform="translate(1000 280) scale(0.3827 0.33333)"><Strokes d={rightInk} /></g>
              <g transform="translate(650 650) scale(0.47832 0.33333)"><Strokes d={lowerInk} /></g>
            </Ink>
            <BackBtn><ChevronLeft size={26} strokeWidth={1.6} /></BackBtn>
            <FloatPill>
              <PinOff size={20} color="#fff" fill="#fff" />
              <Mic size={20} />
              <CircleMinus size={20} />
            </FloatPill>
          </Canvas>
        </Slide>
      </Stage>

      <BottomBar>
        <MeetingName>cyjsmtyrhf <ChevronUp size={20} color="#5f6368" /></MeetingName>
        <CallBtns>
          <CallBtn><MicOff size={22} /></CallBtn>
          <CallBtn $outline><HangUp /></CallBtn>
          <CallBtn><VideoOff size={24} /></CallBtn>
        </CallBtns>
        <BottomRight>
          <ActionBtn $w={124} $mr={21} $gap={7}><CcIcon>CC</CcIcon>Turn on captions</ActionBtn>
          <ActionBtn $w={150} $gap={4} $font={13.6}>
            <PresentIcon><ArrowUp size={12} strokeWidth={3.5} /></PresentIcon>
            <span>R C Thakur<br />is presenting</span>
          </ActionBtn>
          <MoreBtn><EllipsisVertical size={22} strokeWidth={2.6} /></MoreBtn>
        </BottomRight>
      </BottomBar>
    </Page>
  );
}
